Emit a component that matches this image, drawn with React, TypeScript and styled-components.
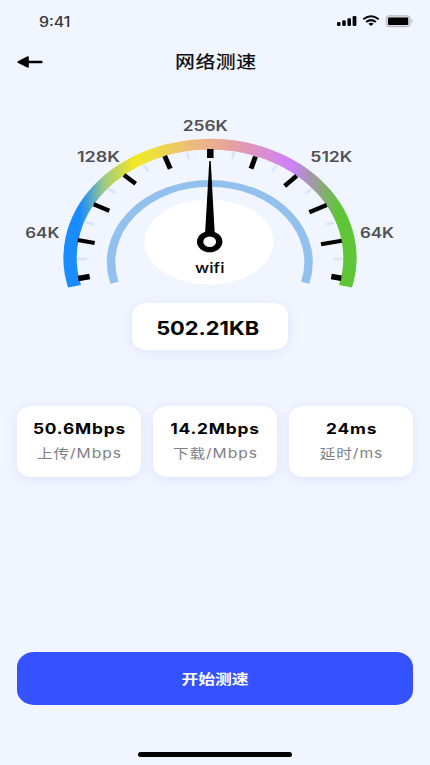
import React from 'react';
import styled, { createGlobalStyle } from 'styled-components';

const GlobalStyle = createGlobalStyle`
  * { box-sizing: border-box; }
  body {
    margin: 0;
    background: #f1f5ff;
    font-family: Inter, "Noto Sans CJK SC", sans-serif;
    color: #101114;
  }
`;

const Screen = styled.main`
  width: 430px;
  height: 765px;
  overflow: hidden;
  display: flex;
  flex-direction: column;
  background: #f1f5ff;
`;

const StatusBar = styled.div`
  height: 42px;
  padding: 1px 17px 0 39px;
  display: flex;
  align-items: center;
  justify-content: space-between;
`;

const StatusIcons = styled.svg`
  display: block;
  width: 78px;
  height: 16px;
  margin-top: -2px;
`;

interface WideProps {
  $size: number;
  $weight: number;
  $stretch: number;
  $spacing?: number;
  $color?: string;
  $origin?: string;
}

/* Extended lettering: glyphs widened about their own centre. */
const Wide = styled.span<WideProps>`
  display: block;
  margin: 0;
  white-space: nowrap;
  font-size: ${(p) => p.$size}px;
  line-height: 24px;
  font-weight: ${(p) => p.$weight};
  letter-spacing: ${(p) => p.$spacing ?? 0}px;
  margin-right: ${(p) => -(p.$spacing ?? 0)}px;
  color: ${(p) => p.$color ?? 'inherit'};
  transform: scaleX(${(p) => p.$stretch});
  transform-origin: ${(p) => p.$origin ?? 'center'};
`;

const Header = styled.header`
  height: 40px;
  padding: 0 16px 0 17px;
  display: grid;
  grid-template-columns: 40px 1fr 40px;
  align-items: center;
  justify-items: center;
`;

const BackButton = styled.button`
  justify-self: start;
  display: flex;
  padding: 0;
  border: 0;
  background: none;
  color: #000;
`;

const GaugeArea = styled.section`
  height: 221px;
`;

const Drawing = styled.svg`
  display: block;
  overflow: visible;
`;

const Scale = styled.text`
  font-size: 13.8px;
  font-weight: 600;
  fill: #4f5156;
`;

const Surface = styled.div`
  background: #fff;
  border-radius: 15px / 12px;
  box-shadow: 0 2px 12px rgba(110, 140, 210, 0.15);
`;

const Reading = styled(Surface)`
  width: 156px;
  height: 47px;
  margin-left: 132px;
  padding-right: 5px;
  padding-top: 2px;
  display: flex;
  align-items: center;
  justify-content: center;
  color: #000;
`;

const Stats = styled.section`
  display: grid;
  grid-template-columns: repeat(3, 1fr);
  gap: 12px;
  margin: 56px 17px 0;
`;

const Stat = styled(Surface)`
  height: 71px;
  display: flex;
  flex-direction: column;
  align-items: center;
  padding-top: 11px;
`;

const StartButton = styled.button`
  height: 53px;
  margin: auto 17px 0;
  border: 0;
  border-radius: 17px / 15px;
  background: #3452ff;
  color: #fff;
  font-family: inherit;
  display: flex;
  align-items: center;
  justify-content: center;
`;

const HomeIndicator = styled.div`
  width: 154px;
  height: 5px;
  margin: 47px 0 8px 137.5px;
  flex-shrink: 0;
  border-radius: 3px;
  background: #000;
`;

const majorTicks = [
  [78.3, 278.5, 89.7, 276.5, 5.5],
  [77.7, 240, 94.7, 243, 4.2],
  [93.7, 204.3, 109.3, 210.7, 4.2],
  [124, 175, 135.7, 183.7, 4.5],
  [164.7, 156, 170.3, 168.7, 5],
  [210.3, 149, 210.3, 158, 6.5],
  [255.5, 156.5, 251, 168.7, 5],
  [296.7, 175.7, 284.7, 186, 4.5],
  [326.7, 205, 309.3, 212.3, 4.2],
  [341.7, 240.7, 321, 244.3, 4.2],
  [341.3, 278.3, 331.3, 276.5, 5.5],
];

const minorTicks = [
  [77.3, 259, 86.7, 259],
  [85, 222, 94, 224.3],
  [108, 188.7, 116, 193.3],
  [143.3, 165, 148.7, 171.3],
  [187, 152.3, 189.3, 159],
  [234, 151.7, 232, 159],
  [276.7, 165, 272.7, 171.3],
  [311.7, 188.7, 305.7, 193.3],
  [334, 222.7, 326, 224.3],
  [342.7, 259, 334, 259],
];

const scaleLabels = [
  { x: 42.3, y: 237.6, w: 34, text: '64K' },
  { x: 98.5, y: 161.5, w: 43, text: '128K' },
  { x: 205.3, y: 130.5, w: 45, text: '256K' },
  { x: 331.3, y: 161.5, w: 42, text: '512K' },
  { x: 377, y: 237.6, w: 34, text: '64K' },
];

const stats = [
  { value: '50.6Mbps', label: '上传/Mbps' },
  { value: '14.2Mbps', label: '下载/Mbps' },
  { value: '24ms', label: '延时/ms' },
];

const arc = (r: number, deg: number) => {
  const a = (deg * Math.PI) / 180;
  const x = r * Math.cos(a);
  const y = r * Math.sin(a);
  return `M${-x} ${y}A${r} ${r} 0 1 1 ${x} ${y}`;
};

function Gauge() {
  return (
    <Drawing width="430" height="221" viewBox="0 82 430 221">
      <defs>
        <linearGradient id="speed" gradientUnits="userSpaceOnUse" x1="-118.5" y1="0" x2="118.5" y2="0">
          <stop offset="0.055" stopColor="#198cff" />
          <stop offset="0.09" stopColor="#51a5cc" />
          <stop offset="0.14" stopColor="#a0cb80" />
          <stop offset="0.24" stopColor="#f1e822" />
          <stop offset="0.3" stopColor="#ede03c" />
          <stop offset="0.44" stopColor="#ecba7d" />
          <stop offset="0.55" stopColor="#e9a697" />
          <stop offset="0.66" stopColor="#dc91c6" />
          <stop offset="0.78" stopColor="#cd80fb" />
          <stop offset="0.86" stopColor="#9c9d9b" />
          <stop offset="0.94" stopColor="#5fc536" />
        </linearGradient>
      </defs>
      <ellipse cx="209" cy="242" rx="64.5" ry="42.5" fill="#fff" />
      <g transform="translate(210 257.8) scale(1.232 1)" fill="none">
        <path d={arc(113.6, 14.5)} stroke="url(#speed)" strokeWidth="10.8" />
      </g>
      <g transform="translate(209.8 262.3) scale(1.25 1)" fill="none">
        <path d={arc(79, 15)} stroke="#93c1ee" strokeWidth="6.8" />
      </g>
      <g stroke="#d9e4fb" strokeWidth="2.6">
        {minorTicks.map(([x1, y1, x2, y2]) => (
          <line key={`${x1}-${y1}`} x1={x1} y1={y1} x2={x2} y2={y2} />
        ))}
      </g>
      <g stroke="#000">
        {majorTicks.map(([x1, y1, x2, y2, w]) => (
          <line key={`${x1}-${y1}`} x1={x1} y1={y1} x2={x2} y2={y2} strokeWidth={w} />
        ))}
      </g>
      <path d="M209.3 161h1.4l4 72h-9.6z" />
      <ellipse cx="209.7" cy="241.8" rx="9.5" ry="7.8" fill="#fff" />
      <path
        fillRule="evenodd"
        d="M197 241.8a12.7 10.5 0 1 0 25.4 0a12.7 10.5 0 1 0-25.4 0zM203.3 241.8a6.4 5.2 0 1 1 12.8 0a6.4 5.2 0 1 1-12.8 0z"
      />
      {scaleLabels.map(({ x, y, w, text }) => (
        <Scale key={x} x={x - w / 2} y={y} textLength={w} lengthAdjust="spacingAndGlyphs">
          {text}
        </Scale>
      ))}
      <text x="195" y="273" textLength="29.5" lengthAdjust="spacingAndGlyphs" fontSize="14" fontWeight="500">
        wifi
      </text>
    </Drawing>
  );
}

export default function App() {
  return (
    <>
      <GlobalStyle />
      <Screen>
        <StatusBar>
          <Wide $size={13.8} $weight={500} $stretch={1.15} $origin="left" $color="#33353a">9:41</Wide>
          <StatusIcons viewBox="0 0 78 16">
            <g fill="#08090b">
              <rect x="2" y="9" width="3.6" height="4" rx="1.2" />
              <rect x="7.2" y="7.3" width="3.6" height="5.7" rx="1.2" />
              <rect x="12.4" y="5.2" width="3.6" height="7.8" rx="1.2" />
              <rect x="17.6" y="3" width="3.8" height="10" rx="1.2" />
            </g>
            <g fill="none" stroke="#08090b" strokeWidth="2">
              <path d="M28.3 6.2Q36 .4 43.7 6.2" />
              <path d="M31.1 9Q36 5.2 40.9 9" />
            </g>
            <path d="M33.3 10.7Q36 8.8 38.7 10.7L36 13z" fill="#08090b" />
            <rect x="51.2" y="2.8" width="23.8" height="10.8" rx="3" fill="#d5d8e0" stroke="#b9bcc6" strokeWidth="1.1" />
            <rect x="53" y="4.5" width="20.2" height="7.4" rx="1.2" fill="#000" />
            <path d="M76.4 6.4q2 1.8 0 3.6z" fill="#b9bcc6" stroke="#b9bcc6" strokeWidth=".6" />
          </StatusIcons>
        </StatusBar>
        <Header>
          <BackButton aria-label="返回">
            <svg width="26" height="14" viewBox="0 0 26 14">
              <path d="M11 7h13.4" stroke="currentColor" strokeWidth="2.5" strokeLinecap="round" />
              <path d="M1.2 7l9.8-5v10z" fill="currentColor" stroke="currentColor" strokeWidth="1.6" strokeLinejoin="round" />
            </svg>
          </BackButton>
          <Wide as="h1" $size={17} $weight={500} $stretch={1.17} $spacing={0.4}>网络测速</Wide>
        </Header>
        <GaugeArea>
          <Gauge />
        </GaugeArea>
        <Reading>
          <Wide $size={18.5} $weight={700} $stretch={1.18}>502.21KB</Wide>
        </Reading>
        <Stats>
          {stats.map(({ value, label }) => (
            <Stat key={label}>
              <Wide $size={14.7} $weight={700} $stretch={1.18} $spacing={0.7} $color="#000">{value}</Wide>
              <Wide $size={13} $weight={400} $stretch={1.2} $spacing={0.8} $color="#7f8084">{label}</Wide>
            </Stat>
          ))}
        </Stats>
        <StartButton>
          <Wide $size={14} $weight={700} $stretch={1.2}>开始测速</Wide>
        </StartButton>
        <HomeIndicator />
      </Screen>
    </>
  );
}
